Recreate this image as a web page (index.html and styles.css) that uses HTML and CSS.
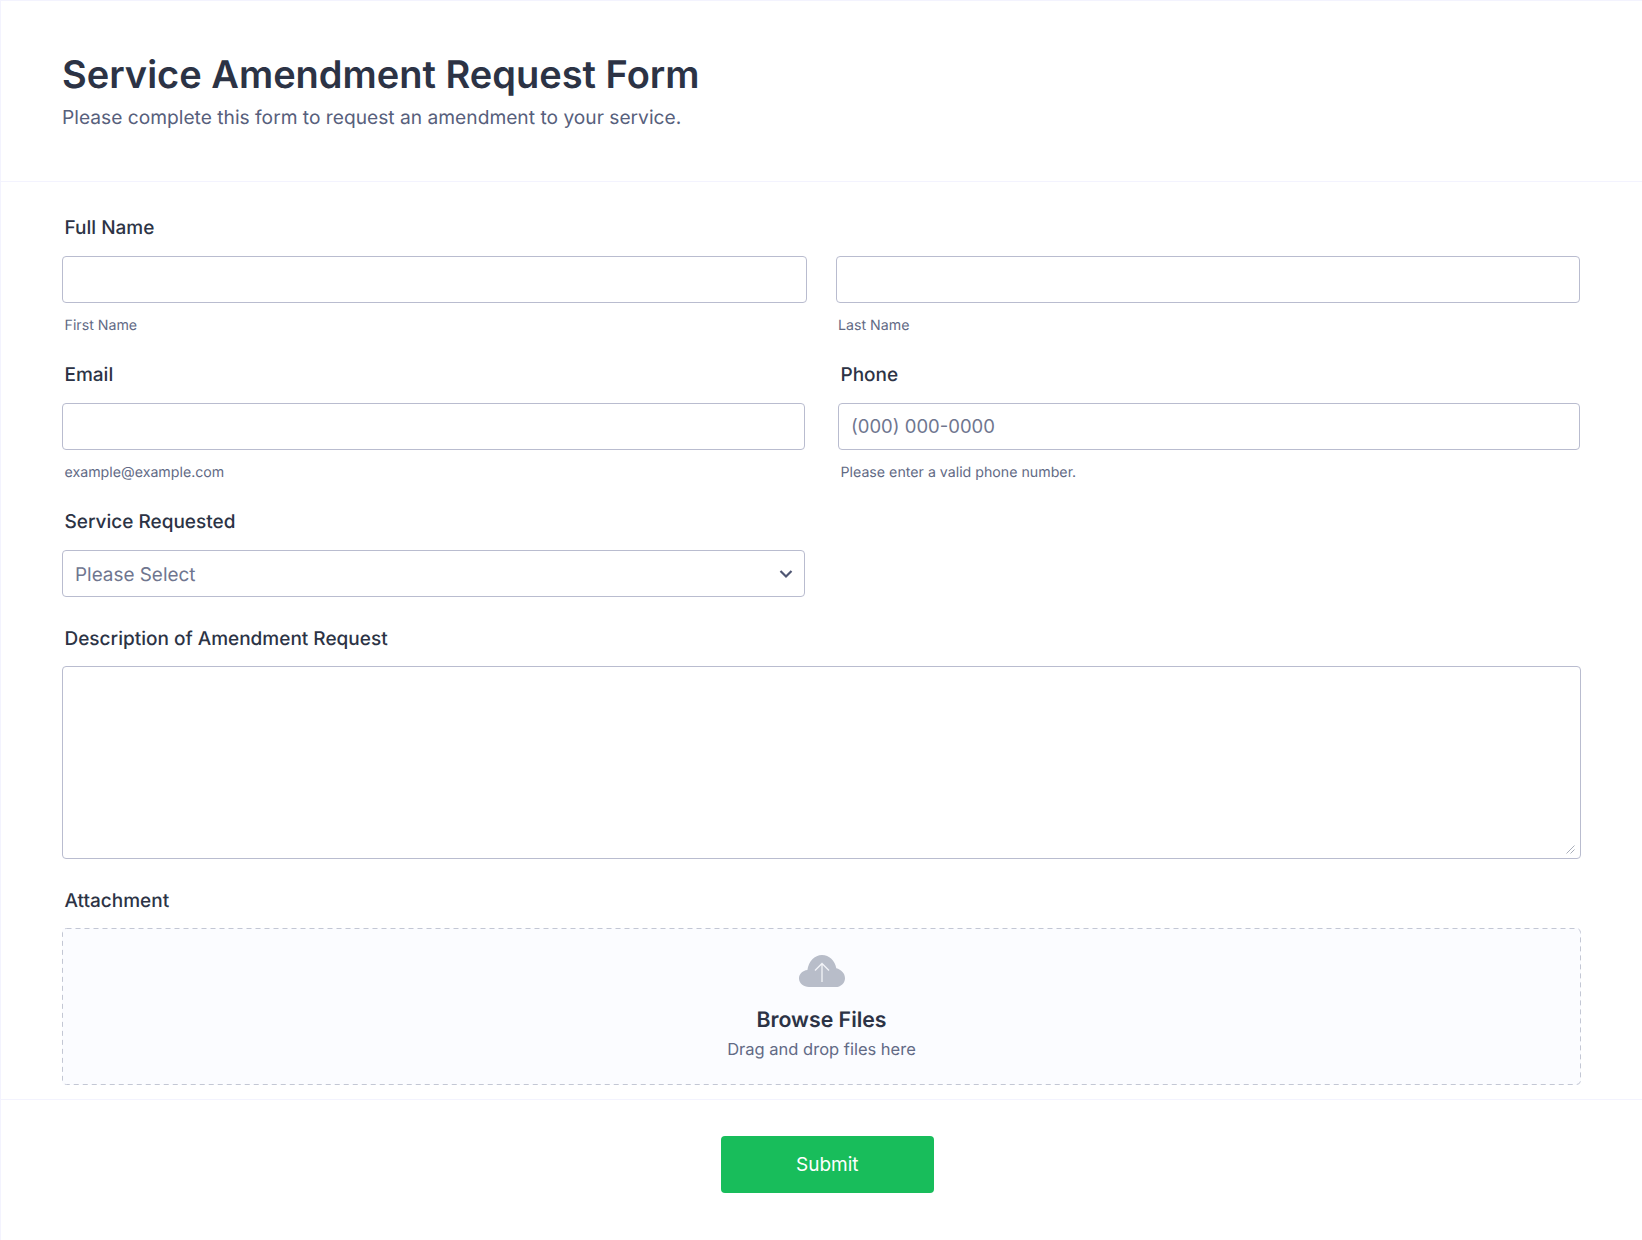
FILE: index.html
```html
<!DOCTYPE html>
<html lang="en">
<head>
<meta charset="utf-8">
<title>Service Amendment Request Form</title>
<link rel="stylesheet" href="styles.css">
</head>
<body>
<form class="form">
  <header class="form-header">
    <h1 class="title">Service Amendment Request Form</h1>
    <p class="subtitle">Please complete this form to request an amendment to your service.</p>
  </header>
  <div class="form-body">
    <div class="field field-name">
      <label class="label">Full Name</label>
      <div class="name-row">
        <div class="col">
          <input class="input" type="text" aria-label="First Name">
          <span class="sublabel">First Name</span>
        </div>
        <div class="col">
          <input class="input" type="text" aria-label="Last Name">
          <span class="sublabel sublabel-last">Last Name</span>
        </div>
      </div>
    </div>
    <div class="contact-row">
      <div class="col">
        <label class="label">Email</label>
        <input class="input" type="email" aria-label="Email">
        <span class="sublabel">example@example.com</span>
      </div>
      <div class="col">
        <label class="label">Phone</label>
        <input class="input" type="tel" placeholder="(000) 000-0000" aria-label="Phone">
        <span class="sublabel">Please enter a valid phone number.</span>
      </div>
    </div>
    <div class="field field-service">
      <label class="label">Service Requested</label>
      <div class="select">
        <span class="select-text">Please Select</span>
        <svg class="chevron" width="14" height="10" viewBox="0 0 14 10" aria-hidden="true"><path d="M1.500 2 7 7.500 12.500 2" fill="none" stroke="#4f5673" stroke-width="2.200"/></svg>
      </div>
    </div>
    <div class="field field-desc">
      <label class="label">Description of Amendment Request</label>
      <div class="textarea-wrap">
        <textarea class="textarea" aria-label="Description of Amendment Request"></textarea>
        <svg class="grip" width="9" height="9" viewBox="0 0 9 9" aria-hidden="true"><path d="M0.500 8.500 8.500 0.500M4.500 8.500 8.500 4.500" fill="none" stroke="#a9aeba" stroke-width="1"/></svg>
      </div>
    </div>
    <div class="field field-attach">
      <label class="label">Attachment</label>
      <div class="upload">
        <svg class="dash" aria-hidden="true"><rect class="dash-rect" x="0.500" y="0.500" rx="4" ry="4"/></svg>
        <svg class="cloud" width="46" height="32" viewBox="0 0 46 32" aria-hidden="true">
          <path d="M10 32C4.500 32 0 28 0 23.500 0 19 3.600 15.600 8.400 15 9.600 6.600 15.500 0 23 0c7.200 0 13 5.600 14.300 13.200C42.200 14.400 46 18.400 46 23.200 46 28.200 41.800 32 36.500 32Z" fill="#b8bdc9"/>
          <path d="M23 27V9M16 15.500 23 8.500l7 7" fill="none" stroke="#f3f4f8" stroke-width="1.300"/>
        </svg>
        <strong class="browse">Browse Files</strong>
        <span class="drag">Drag and drop files here</span>
      </div>
    </div>
  </div>
  <footer class="form-footer">
    <button class="submit" type="button">Submit</button>
  </footer>
</form>
</body>
</html>
```

FILE: styles.css
```css
* { box-sizing: border-box; }
html, body { margin: 0; padding: 0; background: #fff; }
body {
  font-family: Inter, "Liberation Sans", sans-serif;
  color: #2c3345;
  text-rendering: geometricPrecision;
}
.form {
  width: 1642px;
  height: 1240px;
  border: 1px solid #f3f3fe;
  border-bottom: 0;
  border-right: 0;
  background: #fff;
}
.form-header {
  height: 181px;
  padding: 50px 61px 0;
  border-bottom: 1px solid #f3f3fe;
}
.title {
  margin: 0;
  font-size: 38px;
  line-height: 48px;
  font-weight: 600;
  color: #2c3345;
}
.subtitle {
  margin: 3px 0 0;
  font-size: 19.200px;
  line-height: 30px;
  color: #57607c;
}
.form-body {
  padding: 0 61px;
  height: 918px;
  border-bottom: 1px solid #f3f3fe;
}
.label {
  display: block;
  margin: 0 0 14px 2.500px;
  font-size: 19px;
  line-height: 28px;
  font-weight: 500;
  color: #2c3345;
}
.field-name { padding-top: 32px; }
.name-row { display: grid; grid-template-columns: 745px 744px; gap: 29px; }
.col { min-width: 0; }
.contact-row {
  display: grid;
  grid-template-columns: 743px 742px;
  gap: 33px;
  padding-top: 24px;
}
.input, .select, .textarea {
  display: block;
  width: 100%;
  border: 1px solid #b9bccf;
  border-radius: 4px;
  background: #fff;
  font-family: inherit;
  outline: 0;
}
.input { height: 47px; padding: 0 12px 2px; font-size: 18.500px; color: #2c3345; }
.input::placeholder { color: #6f768f; opacity: 1; }
.sublabel {
  display: block;
  margin: 12px 0 0 2.500px;
  font-size: 14.200px;
  line-height: 22px;
  color: #626a85;
}
.sublabel-last { margin-left: 2px; }
.field-service { padding-top: 24px; }
.field-service .select { width: 743px; }
.select {
  height: 47px;
  padding: 0 11px 0 12px;
  display: flex;
  align-items: center;
  justify-content: space-between;
  font-size: 18.900px;
  color: #6f768f;
}
.select-text { padding-top: 1px; }
.field-desc { padding-top: 28px; }
.textarea-wrap { position: relative; margin-top: -1px; }
.textarea { height: 193px; resize: none; }
.grip { position: absolute; right: 6px; bottom: 5px; }
.field-attach { padding-top: 28px; }
.field-attach .label { margin-bottom: 13px; }
.upload {
  position: relative;
  height: 157px;
  border-radius: 4px;
  background: #fbfcff;
  display: flex;
  flex-direction: column;
  align-items: center;
  padding-top: 27px;
}
.dash { position: absolute; top: 0; left: 0; width: 100%; height: 100%; }
.dash-rect {
  width: calc(100% - 1px);
  height: calc(100% - 1px);
  fill: none;
  stroke: #c3c7d4;
  stroke-width: 1;
  stroke-dasharray: 5 4;
}
.cloud { display: block; position: relative; }
.browse {
  position: relative;
  margin-top: 17px;
  font-size: 21.300px;
  line-height: 32px;
  font-weight: 600;
  color: #2c3345;
}
.drag {
  position: relative;
  margin-top: 0;
  font-size: 16.500px;
  line-height: 26px;
  color: #626a85;
}
.form-footer { padding: 36px 0 0 719.500px; }
.submit {
  display: block;
  width: 213.500px;
  height: 57px;
  border: 0;
  border-radius: 4px;
  background: #18bd5b;
  color: #fff;
  font-family: inherit;
  font-size: 19px;
  font-weight: 400;
}
```
